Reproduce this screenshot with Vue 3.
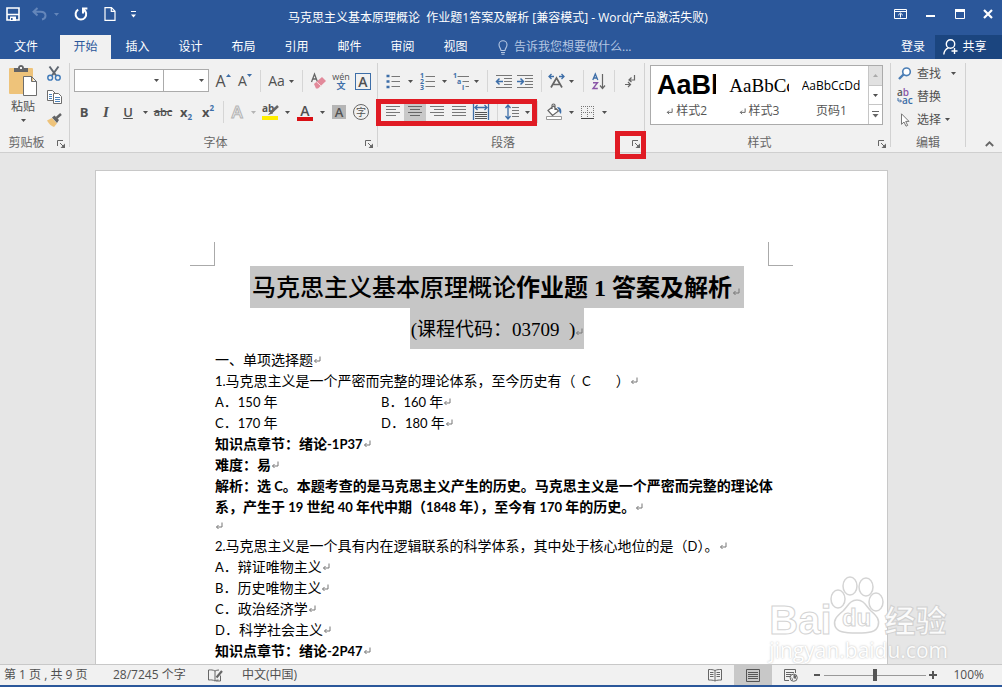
<script setup>
import { ref } from 'vue'

const tabs = ['文件', '开始', '插入', '设计', '布局', '引用', '邮件', '审阅', '视图']
const active = ref('开始')
const zoom = ref(50)

const styleItems = [
  { name: '样式2', linked: true, look: 'heading' },
  { name: '样式3', linked: true, look: 'serif' },
  { name: '页码1', linked: false, look: 'plain' },
]

const lines = [
  { cells: ['一、单项选择题'] },
  { cells: ['1.马克思主义是一个严密而完整的理论体系，至今历史有（  C        ）'] },
  { cells: ['A．150 年', 'B．160 年'] },
  { cells: ['C．170 年', 'D．180 年'] },
  { cells: ['知识点章节：绪论-1P37'], bold: true },
  { cells: ['难度：易'], bold: true },
  { cells: ['解析：选 C。本题考查的是马克思主义产生的历史。马克思主义是一个严密而完整的理论体'], bold: true, wrapped: true },
  { cells: ['系，产生于 19 世纪 40 年代中期（1848 年），至今有 170 年的历史。'], bold: true },
  { cells: [''], blank: true },
  { cells: ['2.马克思主义是一个具有内在逻辑联系的科学体系，其中处于核心地位的是（D）。'] },
  { cells: ['A．辩证唯物主义'] },
  { cells: ['B．历史唯物主义'] },
  { cells: ['C．政治经济学'] },
  { cells: ['D．科学社会主义'] },
  { cells: ['知识点章节：绪论-2P47'], bold: true },
]

// Latin runs use their own face and size beside the Chinese text.
const runs = (text) =>
  text.split(/([A-Za-z0-9.\-]+)/).filter(Boolean).map((t) => ({ t, latin: /^[A-Za-z0-9.\-]/.test(t) }))
</script>

<template>
  <div class="app">
    <svg class="defs" aria-hidden="true">
      <symbol id="caret" viewBox="0 0 5 3"><path d="M0 0h5L2.5 3z" fill="currentColor" /></symbol>
      <symbol id="ret" viewBox="0 0 8 8"><path d="M7 0.5v4.5H1.5M3.5 3L1.5 5l2 2" fill="none" stroke="currentColor" /></symbol>
      <symbol id="launch" viewBox="0 0 8 8">
        <path d="M0.5 6V0.5H6M3 3l3.5 3.5" fill="none" stroke="currentColor" /><path d="M8 3.5V8H3.5z" fill="currentColor" />
      </symbol>
    </svg>

    <header class="top">
      <div class="titlebar">
        <div class="quick">
          <button class="w26" aria-label="保存">
            <svg width="14" height="14" viewBox="0 0 14 14"><path d="M1 1h12v12H1zM1 7.5h12" fill="none" stroke="#fff" stroke-width="1.6" /><path d="M4 9.5h6V14H4z" fill="#fff" /><path d="M5 11h1.6v2H5z" fill="#2b579a" /></svg>
          </button>
          <button class="w26 dim" aria-label="撤消">
            <svg width="15" height="14" viewBox="0 0 15 14"><path d="M5.5 1L1.5 4.7l4 3.8M2 4.7h6.5c3 0 5 1.4 5 4 0 2-1.4 3.3-3.5 3.8" fill="none" stroke="currentColor" stroke-width="2" /></svg>
          </button>
          <button class="w8 dim" aria-label="撤消选项"><svg width="5" height="3"><use href="#caret" /></svg></button>
          <button class="w42" aria-label="重复">
            <svg width="14" height="14" viewBox="0 0 14 14"><path d="M4.2 2.6A5.3 5.3 0 1 0 9.6 2.6M9 6.4V1.6H13.4" fill="none" stroke="#fff" stroke-width="2" /></svg>
          </button>
          <button class="w16" aria-label="新建">
            <svg width="12" height="14" viewBox="0 0 12 14"><path d="M1 0.7h6.5L11 4.2v9.1H1zM7.3 0.7v3.7H11" fill="none" stroke="#fff" stroke-width="1.2" /></svg>
          </button>
          <button class="w30" aria-label="自定义">
            <svg width="5" height="7" viewBox="0 0 5 7"><path d="M0 0.5h5" stroke="#fff" /><path d="M0 3.5h5L2.5 6.5z" fill="#fff" /></svg>
          </button>
        </div>
        <h1>马克思主义基本原理概论&nbsp; 作业题1答案及解析 [兼容模式] - Word(产品激活失败)</h1>
        <div class="window">
          <button class="w28" aria-label="功能区显示选项">
            <svg width="13" height="10" viewBox="0 0 13 10"><path d="M0.5 0.5h12v9H0.5zM0.5 2.5h12M6.5 8.5V4.5M4.2 6.2L6.5 4l2.3 2.2" fill="none" stroke="#fff" /></svg>
          </button>
          <button class="w32" aria-label="最小化"><svg width="9" height="9"><path d="M0 6h9" stroke="#fff" stroke-width="2" /></svg></button>
          <button class="w28" aria-label="最大化"><svg width="10" height="10"><path d="M0.5 0.5h9v9H0.5z" fill="none" stroke="#fff" /><path d="M0 1.5h10" stroke="#fff" stroke-width="3" /></svg></button>
          <button class="w28" aria-label="关闭"><svg width="10" height="10"><path d="M1 1l8 8M9 1L1 9" stroke="#fff" stroke-width="2.2" /></svg></button>
        </div>
      </div>
      <nav class="tabs">
        <button v-for="t in tabs" :key="t" class="tab" :class="{ file: t === '文件', on: t === active }" @click="active = t">{{ t }}</button>
        <button class="tell">
          <svg width="10" height="15" viewBox="0 0 10 15"><path d="M3 10.5C3 8.5 1 7.6 1 4.8a4 4 0 0 1 8 0C9 7.6 7 8.5 7 10.5zM3 12.5h4M3.5 14.3h3" fill="none" stroke="currentColor" stroke-width="1.1" /></svg>
          <span>告诉我您想要做什么...</span>
        </button>
        <button class="login">登录</button>
        <button class="share">
          <svg width="15" height="16" viewBox="0 0 15 16"><circle cx="7.5" cy="5" r="4.2" fill="none" stroke="#fff" stroke-width="1.4" /><path d="M0.8 15.5c.3-3.500 2-5.600 4.700-6.600M8.500 12h6M11.500 9v6" fill="none" stroke="#fff" stroke-width="1.4" /></svg>
          共享
        </button>
      </nav>
    </header>

    <section class="ribbon">
      <div class="group clip">
        <div class="body split">
          <button class="paste">
            <svg width="28" height="31" viewBox="0 0 28 31"><rect y="3" width="24" height="26" rx="1" fill="#eec37a" /><path d="M5 3h4c0-4 6-4 6 0h4v4H5z" fill="#636466" /><rect x="11" y="2" width="2" height="2" fill="#f1f1f1" /><path d="M14.500 11.500h8l5 5v14h-13zM22.500 11.500v5h5" fill="#fff" stroke="#6d6d6d" /></svg>
            <span>粘贴</span>
            <svg width="5" height="3"><use href="#caret" /></svg>
          </button>
          <div class="stack">
            <button aria-label="剪切">
              <svg width="14" height="15" viewBox="0 0 14 15"><path d="M2.500 0.500l6.500 9M11.500 0.500L5 9.500" stroke="#5e6670" stroke-width="2" /><circle cx="3.200" cy="11.700" r="2.400" fill="none" stroke="#3d78b8" stroke-width="1.400" /><circle cx="10.800" cy="11.700" r="2.400" fill="none" stroke="#3d78b8" stroke-width="1.400" /></svg>
            </button>
            <button aria-label="复制">
              <svg width="15" height="14" viewBox="0 0 15 14"><path d="M0.500 0.500h5l2.500 2.500v7.500H0.500z" fill="#fff" stroke="#6d6d6d" /><path d="M2 4.500h3M2 6.500h3M2 8.500h3" stroke="#4a83bd" /><path d="M6.500 3.500h5l3 3v7h-8z" fill="#fff" stroke="#6d6d6d" /><path d="M8 7.500h5M8 9.500h5M8 11.500h5" stroke="#4a83bd" /></svg>
            </button>
            <button aria-label="格式刷">
              <svg width="15" height="14" viewBox="0 0 15 14"><path d="M0 7.500L5 5l5 5.500L7 14C4 13 2 11 0 7.500z" fill="#eec37a" /><path d="M5 4.500l2.500-2 4.500 4.500-2 3z" fill="#636466" /><path d="M9.500 5L14 1" stroke="#636466" stroke-width="2.500" /></svg>
            </button>
          </div>
        </div>
        <div class="caption"><span>剪贴板</span><button aria-label="剪贴板选项"><svg width="8" height="8"><use href="#launch" /></svg></button></div>
      </div>

      <div class="group font">
        <div class="body">
          <div class="row">
            <label class="combo wide"><select aria-label="字体名称"><option></option></select><svg width="5" height="3"><use href="#caret" /></svg></label>
            <label class="combo narrow"><select aria-label="字号"><option></option></select><svg width="5" height="3"><use href="#caret" /></svg></label>
            <button class="w22 big" aria-label="增大字号">A<svg class="mark" width="5" height="3" viewBox="0 0 5 3"><path d="M0 3h5L2.500 0z" fill="#3d6ea8" /></svg></button>
            <button class="w22 small" aria-label="减小字号">A<svg class="mark" width="5" height="3" viewBox="0 0 5 3"><path d="M0 0h5L2.500 3z" fill="#3d6ea8" /></svg></button>
            <i class="sep w8"></i>
            <button class="w34 case" aria-label="更改大小写">Aa <svg width="5" height="3"><use href="#caret" /></svg></button>
            <i class="sep w8"></i>
            <button class="w24" aria-label="清除格式">
              <svg width="15" height="16" viewBox="0 0 15 16"><path d="M0.500 9L3.500 1l3 8M2 6h3.500" fill="none" stroke="#666" stroke-width="1.300" /><path d="M3 11L11 4l4 4-8 7.500H5z" fill="#e2899a" /><path d="M5.500 8.800l5 4.500" stroke="#f8dfe3" /></svg>
            </button>
            <button class="w22 wen" aria-label="拼音指南"><span>wén</span><b>文</b></button>
            <button class="w22" aria-label="字符边框"><span class="boxed">A</span></button>
          </div>
          <div class="row">
            <button class="w22"><b>B</b></button>
            <button class="w22"><em>I</em></button>
            <button class="w22"><u>U</u></button>
            <button class="w12" aria-label="下划线选项"><svg width="5" height="3"><use href="#caret" /></svg></button>
            <button class="w24 strike"><s>abc</s></button>
            <button class="w22 idx"><b>x</b><sub>2</sub></button>
            <button class="w22 idx"><b>x</b><sup>2</sup></button>
            <i class="sep w8"></i>
            <button class="w20 outline">A</button>
            <button class="w12 pale" aria-label="文本效果选项"><svg width="5" height="3"><use href="#caret" /></svg></button>
            <button class="w22" aria-label="突出显示">
              <svg width="17" height="17" viewBox="0 0 17 17"><text x="0" y="8" font-size="10" font-weight="700" fill="#555" font-family="Open Sans, sans-serif">ab</text><path d="M16 2L9 8.500" stroke="#666" stroke-width="2.600" /><path d="M9.500 6.500L6 11l5-1.500z" fill="#666" /><rect y="12" width="16" height="4" fill="#ffee00" /></svg>
            </button>
            <button class="w12" aria-label="突出显示选项"><svg width="5" height="3"><use href="#caret" /></svg></button>
            <button class="w24 color"><span>A</span></button>
            <button class="w10" aria-label="颜色选项"><svg width="5" height="3"><use href="#caret" /></svg></button>
            <button class="w24"><span class="shade">A</span></button>
            <button class="w20"><span class="ring">字</span></button>
          </div>
        </div>
        <div class="caption"><span>字体</span><button aria-label="字体选项"><svg width="8" height="8"><use href="#launch" /></svg></button></div>
      </div>

      <div class="group para">
        <div class="body">
          <div class="row">
            <button class="w22" aria-label="项目符号">
              <svg width="14" height="15" viewBox="0 0 14 15"><path d="M0.500 2h3M0.500 7.500h3M0.500 13h3" stroke="#3d6ea8" stroke-width="2.400" /><path d="M5.500 2.500H14M5.500 7.500H14M5.500 12.500H14" stroke="#777" /></svg>
            </button>
            <button class="w12" aria-label="项目符号选项"><svg width="5" height="3"><use href="#caret" /></svg></button>
            <button class="w22" aria-label="编号">
              <svg width="15" height="17" viewBox="0 0 15 17"><g font-size="7" font-weight="700" fill="#3d6ea8" font-family="Open Sans, sans-serif"><text y="5">1</text><text y="11">2</text><text y="17">3</text></g><path d="M5.500 3.500H15M5.500 8.500H15M5.500 13.500H15" stroke="#777" /></svg>
            </button>
            <button class="w12" aria-label="编号选项"><svg width="5" height="3"><use href="#caret" /></svg></button>
            <button class="w22" aria-label="多级列表">
              <svg width="17" height="17" viewBox="0 0 17 17"><g font-size="7" font-weight="700" fill="#3d6ea8" font-family="Open Sans, sans-serif"><text y="5">1</text><text x="4" y="11">a</text><text x="9" y="17">i</text></g><path d="M4.500 3.500H16M9.500 8.500H16M12.500 13.500H16" stroke="#777" /></svg>
            </button>
            <button class="w8" aria-label="多级列表选项"><svg width="5" height="3"><use href="#caret" /></svg></button>
            <i class="sep w14"></i>
            <button class="w20" aria-label="减少缩进">
              <svg width="16" height="13" viewBox="0 0 16 13"><path d="M0 0.500h16M8 3.500h8M8 6.500h8M8 9.500h8M0 12.500h16" stroke="#777" /><path d="M7 6.500H1M3.500 3.500l-3 3 3 3" fill="none" stroke="#3d6ea8" stroke-width="1.500" /></svg>
            </button>
            <button class="w22" aria-label="增加缩进">
              <svg width="16" height="13" viewBox="0 0 16 13"><path d="M0 0.500h16M8 3.500h8M8 6.500h8M8 9.500h8M0 12.500h16" stroke="#777" /><path d="M0 6.500h6M3.500 3.500l3 3-3 3" fill="none" stroke="#3d6ea8" stroke-width="1.500" /></svg>
            </button>
            <i class="sep w10"></i>
            <button class="w20" aria-label="中文版式">
              <svg width="17" height="14" viewBox="0 0 17 14"><path d="M3 13.500L8.500 4l5.500 9.500M5.500 10.500h6" fill="none" stroke="#666" stroke-width="1.700" /><path d="M6 2.500H1M3.500 0L1 2.500 3.500 5M11 2.500h5M13.500 0L16 2.500 13.500 5" fill="none" stroke="#3d6ea8" stroke-width="1.300" /></svg>
            </button>
            <button class="w10" aria-label="中文版式选项"><svg width="5" height="3"><use href="#caret" /></svg></button>
            <i class="sep w14"></i>
            <button class="w18" aria-label="排序">
              <svg width="14" height="17" viewBox="0 0 14 17"><path d="M0.800 7L3.300 1l2.500 6M1.700 5h3.200" fill="none" stroke="#3d6ea8" stroke-width="1.300" /><path d="M1 9.700h4.500L1 15.500h4.800" fill="none" stroke="#8a56a8" stroke-width="1.400" /><path d="M10.500 1v14M8 12.500l2.500 3 2.500-3" fill="none" stroke="#666" stroke-width="1.200" /></svg>
            </button>
            <i class="sep w12"></i>
            <button class="w20" aria-label="显示编辑标记">
              <svg width="11" height="14" viewBox="0 0 11 14"><path d="M9.500 1v5H4M6.500 3.500L4 6l2.500 2M0 10.500h5M3 8l2.500 2.500L3 13" fill="none" stroke="#666" stroke-width="1.200" /></svg>
            </button>
          </div>
          <div class="row">
            <button class="w22" aria-label="左对齐"><svg width="14" height="12"><path d="M0 .5h14M0 3.500h10M0 6.500h14M0 9.500h10" stroke="#777" /></svg></button>
            <button class="w22 pressed" aria-label="居中"><svg width="14" height="12"><path d="M0 .5h14M2 3.500h10M0 6.500h14M2 9.500h10" stroke="#666" /></svg></button>
            <button class="w22" aria-label="右对齐"><svg width="14" height="12"><path d="M0 .5h14M4 3.500h10M0 6.500h14M4 9.500h10" stroke="#777" /></svg></button>
            <button class="w22" aria-label="两端对齐"><svg width="14" height="12"><path d="M0 .5h14M0 3.500h14M0 6.500h14M0 9.500h14" stroke="#777" /></svg></button>
            <button class="w22" aria-label="分散对齐"><svg width="16" height="16" viewBox="0 0 16 16"><path d="M0.500 0v16M15.500 0v16M2 3.500h12M4.500 1L2 3.500 4.500 6M11.500 1L14 3.500 11.500 6" fill="none" stroke="#3d6ea8" stroke-width="1.300" /><path d="M2 8.500h12M2 10.500h12M2 12.500h12M2 14.500h12" stroke="#555" /></svg></button>
            <i class="sep w10"></i>
            <button class="w20" aria-label="行距"><svg width="14" height="16" viewBox="0 0 14 16"><path d="M3 1v14M0.500 4L3 1l2.500 3M0.500 12L3 15l2.500-3" fill="none" stroke="#3d6ea8" stroke-width="1.300" /><path d="M7 3.500h7M7 6.500h7M7 9.500h7M7 12.500h7" stroke="#777" /></svg></button>
            <button class="w10" aria-label="行距选项"><svg width="5" height="3"><use href="#caret" /></svg></button>
            <i class="sep w10"></i>
            <button class="w24" aria-label="底纹"><svg width="17" height="16" viewBox="0 0 17 16"><path d="M2 6.500L7.500 2l5 5-6 4.500zM6 5V1.500c0-2 3-2 3 0V6" fill="#fff" stroke="#666" stroke-width="1.200" /><path d="M11 3c4 0 5 3 4 7-1-1-2-2-2-4z" fill="#3d6ea8" /><path d="M0.500 12.500h15v3h-15z" fill="#fff" stroke="#999" /></svg></button>
            <button class="w10" aria-label="底纹选项"><svg width="5" height="3"><use href="#caret" /></svg></button>
            <button class="w22" aria-label="边框"><svg width="13" height="13" viewBox="0 0 13 13"><path d="M0.500 0v12M6.500 0v12M12.500 0v12M0 0.500h13M0 6.500h13" stroke="#777" stroke-dasharray="1 1" /><path d="M0 12.500h13" stroke="#444" /></svg></button>
            <button class="w12" aria-label="边框选项"><svg width="5" height="3"><use href="#caret" /></svg></button>
            <span class="redbox align"></span>
          </div>
        </div>
        <div class="caption"><span>段落</span><button aria-label="段落选项"><svg width="8" height="8"><use href="#launch" /></svg></button><span class="redbox corner"></span></div>
      </div>

      <div class="group styles">
        <div class="body">
          <div class="gallery">
            <button v-for="s in styleItems" :key="s.name" class="item">
              <span class="preview" :class="s.look">AaBbCcDd</span>
              <span class="name"><svg v-if="s.linked" width="7" height="7"><use href="#ret" /></svg>{{ s.name }}</span>
            </button>
            <div class="scroller">
              <button class="off" aria-label="上一行"><svg width="5" height="3" viewBox="0 0 5 3"><path d="M0 3h5L2.500 0z" fill="#aaa" /></svg></button>
              <button aria-label="下一行"><svg width="5" height="3"><use href="#caret" /></svg></button>
              <button aria-label="更多样式"><svg width="7" height="7" viewBox="0 0 7 7"><path d="M0 0.500h7" stroke="#666" /><path d="M0.500 3h6L3.500 6.500z" fill="#666" /></svg></button>
            </div>
          </div>
        </div>
        <div class="caption"><span>样式</span><button aria-label="样式选项"><svg width="8" height="8"><use href="#launch" /></svg></button></div>
      </div>

      <div class="group edit">
        <div class="body stack">
          <button><svg width="16" height="14" viewBox="0 0 16 14"><circle cx="9.500" cy="4.800" r="3.800" fill="#fff" stroke="#4a7db5" stroke-width="1.600" /><path d="M6.500 7.500L2 12" stroke="#4a7db5" stroke-width="2.400" /></svg>查找<svg class="far" width="5" height="3"><use href="#caret" /></svg></button>
          <button><svg width="16" height="16" viewBox="0 0 16 16"><g font-size="10" font-weight="600" font-family="Open Sans, sans-serif"><text y="7" fill="#555">a<tspan fill="#8a56a8">b</tspan></text><text x="5" y="15" fill="#3d6ea8">ac</text></g><path d="M1 9v3h3M3 10.500L4.500 12 3 13.500" fill="none" stroke="#3d6ea8" /></svg>替换</button>
          <button><svg width="16" height="14" viewBox="0 0 16 14"><path d="M4.500 0.800v10.500l2.500-2.300 2 4.200 1.700-.8-2-4h3.300z" fill="#fff" stroke="#777" /></svg>选择<svg width="5" height="3"><use href="#caret" /></svg></button>
        </div>
        <div class="caption"><span>编辑</span></div>
      </div>
      <button class="collapse" aria-label="折叠功能区"><svg width="9" height="6" viewBox="0 0 9 6"><path d="M0.800 5l3.700-3.700L8.200 5" fill="none" stroke="#666" stroke-width="1.800" /></svg></button>
    </section>

    <main class="work">
      <article class="page">
        <div class="corners"><i class="left"></i><i class="right"></i></div>
        <div class="doc">
          <h2><span class="sel"><span class="light">马克思主义基本原理概论</span>作业题 1 答案及解析<svg class="ret" width="8" height="8"><use href="#ret" /></svg></span></h2>
          <p class="sub"><span class="sel">(课程代码：03709&nbsp; )<svg class="ret" width="8" height="8"><use href="#ret" /></svg></span></p>
          <p v-for="(l, i) in lines" :key="i" class="line" :class="{ bold: l.bold, blank: l.blank }">
            <span v-for="(c, j) in l.cells" :key="j" :class="{ half: l.cells.length > 1 && j === 0 }"><span v-for="(r, k) in runs(c)" :key="k" :class="{ latin: r.latin }">{{ r.t }}</span></span><svg v-if="!l.wrapped" class="ret" width="8" height="8"><use href="#ret" /></svg>
          </p>
        </div>
      </article>
      <div class="watermark">
        <div class="brand">
          <span class="bai">Bai</span>
          <span class="paw">
            <svg width="54" height="58" viewBox="0 0 54 58"><g fill="#fff" stroke="#cdcdcd" stroke-width="1.500"><ellipse cx="8" cy="23" rx="7" ry="9" /><ellipse cx="20" cy="10" rx="7" ry="9" /><ellipse cx="36" cy="11" rx="7" ry="9" /><ellipse cx="46" cy="26" rx="7" ry="9" /><path d="M27 24c7 0 9 6 14 11 6 5 9 9 7 15-2 6-8 7-21 7s-20-1-22-7c-2-6 2-10 8-15 5-5 7-11 14-11z" /></g></svg>
            <b>du</b>
          </span>
          <span class="jy">经验</span>
        </div>
        <div class="url">jingyan.baidu.com</div>
      </div>
    </main>

    <footer class="status">
      <span class="w90">第 1 页 , 共 9 页</span>
      <span class="w76">28/7245 个字</span>
      <button class="proof" aria-label="校对"><svg width="15" height="13" viewBox="0 0 15 13"><path d="M7 12V2C5 .8 3 .8 .5 1v10c2.500-.2 4.500-.2 6.500 1 1-.6 2-1 3.500-1M7 2c1-.7 2.500-1 4-1" fill="none" stroke="#666" /><path d="M14 2L8.500 8.500" stroke="#666" stroke-width="2.200" /><path d="M12.500 6.500V12H8" fill="none" stroke="#666" /></svg></button>
      <span>中文(中国)</span>
      <div class="views">
        <button aria-label="阅读视图"><svg width="14" height="13" viewBox="0 0 14 13"><path d="M7 12V1.500C5 .5 3 .5 .5 .5v10.500C3 11 5 11 7 12c2-1 4-1 6.500-1V.5C11 .5 9 .5 7 1.500M2 3.500h3.500M2 5.500h3.500M2 7.500h3.500M8.500 3.500H12M8.500 5.500H12M8.500 7.500H12" fill="none" stroke="#666" /></svg></button>
        <button class="on" aria-label="页面视图"><svg width="14" height="13" viewBox="0 0 14 13"><path d="M.5 .5h13v12H.5zM2 3.500h10M2 5.500h10M2 7.500h10M2 9.500h10" fill="none" stroke="#555" /></svg></button>
        <button aria-label="Web 版式视图"><svg width="14" height="13" viewBox="0 0 14 13"><path d="M5 11.500H.5V.5h11V4M2 3.500h8M2 5.500h5M2 7.500h4" fill="none" stroke="#666" /><circle cx="9.700" cy="8.700" r="3.600" fill="#f1f1f1" stroke="#666" /><path d="M9.500 5.500l3 1.500-1 3-2-1zM7 8l2 2v2z" fill="#666" /></svg></button>
        <button class="step" aria-label="缩小"><svg width="6" height="8"><path d="M0 4h6" stroke="#555" stroke-width="2" /></svg></button>
        <input v-model="zoom" type="range" min="0" max="100" aria-label="缩放" />
        <button class="step" aria-label="放大"><svg width="8" height="8"><path d="M0 4h8M4 0v8" stroke="#555" stroke-width="2" /></svg></button>
        <span class="pct">100%</span>
      </div>
    </footer>
  </div>
</template>

<style>
body { margin: 0; }
</style>

<style scoped>
* { box-sizing: border-box; }
.app {
  height: 100vh; display: flex; flex-direction: column; overflow: hidden;
  font: 12px/18px "Open Sans", "Noto Sans CJK SC", sans-serif; color: #505050; white-space: nowrap;
}
.defs { position: absolute; width: 0; height: 0; }
button {
  padding: 0; border: 0; background: none; font: inherit; color: inherit; white-space: nowrap;
  display: flex; align-items: center; justify-content: center; flex: none;
}
svg { flex: none; overflow: visible; }
p, h1, h2 { margin: 0; font-weight: 400; font-size: inherit; }

.w8 { width: 8px; } .w10 { width: 10px; } .w12 { width: 12px; } .w14 { width: 14px; } .w16 { width: 16px; }
.w18 { width: 18px; } .w20 { width: 20px; } .w22 { width: 22px; } .w24 { width: 24px; } .w26 { width: 26px; }
.w28 { width: 28px; } .w30 { width: 30px; } .w32 { width: 32px; } .w34 { width: 34px; } .w42 { width: 42px; }
.w76 { width: 76px; } .w90 { width: 90px; }

.top { background: #2b579a; color: #fff; }
.titlebar { height: 35px; display: grid; grid-template-columns: 1fr auto 1fr; align-items: center; }
.titlebar h1 { padding-right: 6px; }
.quick { display: flex; height: 28px; margin-bottom: 7px; align-self: end; }
.dim { color: #7d9ac8; opacity: 0.7; }
.window { display: flex; justify-content: flex-end; height: 28px; margin-bottom: 7px; align-self: end; }
.tabs { display: flex; height: 24px; }
.tab { width: 53px; padding-bottom: 1px; }
.tab.file { width: 52px; margin-right: 8px; }
.tab.on { width: 51px; background: #f1f1f1; color: #2b579a; }
.tell { margin-left: 16px; gap: 6px; color: #b4c6e2; }
.login { margin-left: auto; width: 44px; padding-bottom: 1px; }
.share { width: 67px; gap: 4px; padding: 0 7px 1px 0; background: #1b457f; }

.ribbon { display: flex; height: 94px; flex: none; background: #f1f1f1; border-bottom: 1px solid #cfcfcf; }
.group { display: flex; flex-direction: column; position: relative; flex: none; }
.group::after { content: ""; position: absolute; right: 0; top: 4px; bottom: 5px; border-right: 1px solid #d2d2d2; }
.clip { width: 70px; }
.font { width: 308px; }
.para { width: 267px; }
.styles { flex: 0 1 246px; min-width: 0; }
.edit { width: 75px; }
.body { height: 74px; padding: 10px 4px 0; }
.caption { display: flex; height: 19px; color: #666; position: relative; line-height: 20px; padding-right: 1px; }
.caption span:first-child { flex: 1; text-align: center; }
.caption button { width: 16px; padding-top: 3px; }
.row { display: flex; height: 24px; margin-bottom: 7px; position: relative; }
.font .row:last-child { margin-left: -1px; }
.sep { position: relative; flex: none; }
.sep::after { content: ""; position: absolute; left: 50%; top: 1px; bottom: 1px; border-left: 1px solid #d6d6d6; }

.body.split { display: flex; padding: 3px 0 0; }
.paste { width: 46px; flex-direction: column; justify-content: flex-start; padding-top: 3px; line-height: 22px; }
.paste svg:last-child { margin-top: 1px; }
.stack { display: flex; flex-direction: column; }
.stack button { height: 23px; }
.split .stack { width: 16px; }
.body.stack { padding: 3px 0 0 6px; }
.edit .stack button { justify-content: flex-start; gap: 4px; }
.edit .far { margin-left: 6px; }

.combo { position: relative; display: flex; align-items: center; height: 23px; }
.combo select { appearance: none; width: 100%; height: 100%; border: 1px solid #ababab; border-radius: 0; background: #fff; margin: 0; }
.combo svg { position: absolute; right: 5px; }
.wide { width: 92px; margin-right: -1px; }
.narrow { width: 47px; margin-right: 3px; }
.big, .small { font-size: 16px; position: relative; }
.small { font-size: 14px; }
.big .mark, .small .mark { align-self: flex-start; margin-top: 5px; }
.case { font-size: 14px; gap: 4px; }
.wen { flex-direction: column; font-size: 9px; line-height: 9px; }
.wen b { color: #3d6ea8; line-height: 10px; }
.boxed { width: 16px; border: 1px solid #3d6ea8; font-size: 14px; font-weight: 600; line-height: 15px; }
.row b, .row em, .row u { font-size: 13px; }
.row .wen b { font-size: 9px; }
.row u, .row em { font-weight: 600; }
.row em { font-family: "Liberation Serif", serif; font-size: 15px; }
.strike { font-size: 11px; font-weight: 600; }
.idx sub, .idx sup { font-size: 8px; line-height: 8px; color: #3d6ea8; font-weight: 700; }
.idx sub { margin-top: 9px; }
.idx sup { margin-top: -9px; }
.outline { font-size: 17px; font-weight: 600; color: #f1f1f1; -webkit-text-stroke: 1px #b4b4b4; }
.pale { color: #b4b4b4; }
.color span { width: 16px; border-bottom: 4px solid #d90f14; font-size: 14px; font-weight: 600; line-height: 13px; }
.shade { width: 14px; background: #b5b5b5; font-size: 13px; font-weight: 600; line-height: 14px; }
.ring { width: 16px; height: 16px; border: 1px solid #666; border-radius: 50%; font-size: 10px; line-height: 14px; }
.pressed { background: #c8c8c8; height: 20px; align-self: center; }
.redbox { position: absolute; border: 5px solid #e01b24; pointer-events: none; }
.align { left: -6px; top: -1px; width: 161px; height: 27px; }
.corner { right: -1px; top: -2px; width: 31px; height: 28px; z-index: 2; }

.styles .body { padding: 6px 8px 0 5px; }
.gallery { display: flex; height: 60px; background: #fff; border: 1px solid #ababab; overflow: hidden; }
.item { flex: 1 1 72px; min-width: 0; flex-direction: column; align-items: stretch; justify-content: flex-start; padding: 2px 7px 0 6px; }
.preview { height: 34px; line-height: 36px; overflow: hidden; text-align: left; color: #000; }
.heading { font: 700 27px/34px "Liberation Sans", sans-serif; }
.serif { font: 19px/36px "Liberation Serif", serif; }
.name { display: flex; gap: 3px; align-items: center; justify-content: center; color: #555; }
.scroller { width: 14px; display: flex; flex-direction: column; border-left: 1px solid #c6c6c6; }
.scroller button { flex: 1; border-bottom: 1px solid #c6c6c6; }
.scroller .off { background: #e1e1e1; }
.scroller button:last-child { border: 0; }
.collapse { margin-left: auto; width: 26px; align-self: flex-end; height: 16px; }

.work { flex: 1; min-height: 0; position: relative; overflow: hidden; background: #e6e6e6; padding: 17px 19px 0 0; }
.page { max-width: 793px; height: 1120px; margin: 0 auto; background: #fff; border: 1px solid #c8c8c8; padding-top: 71px; color: #000; }
.corners { display: flex; justify-content: space-between; padding: 0 94px; height: 24px; }
.corners i { width: 25px; border-bottom: 1px solid #aaa; }
.corners .left { border-right: 1px solid #aaa; }
.corners .right { border-left: 1px solid #aaa; }
.doc { padding: 0 118px 0 119px; font: 14px/21px "Noto Sans CJK SC", sans-serif; }
.ret { color: #777; }
h2, .sub { display: flex; justify-content: center; padding-left: 10px; margin: 0 -20px; }
.sel { background: #c6c6c6; padding: 2px 1px 0; }
h2 { font: 700 24px/40px "Liberation Serif", "Noto Sans CJK SC", serif; }
h2 .sel { padding: 2px 4px 0 2px; }
.light { font-weight: 500; }
.sub { font: 19px/39px "Liberation Serif", "Noto Sans CJK SC", serif; }
.line { height: 21px; white-space: pre; display: flex; align-items: center; }
.bold { font-weight: 700; }
.blank { height: 18px; }
.latin { font-family: Lato, "Noto Sans CJK SC", sans-serif; font-size: 13px; }
.half { width: 166px; }

.watermark { position: absolute; right: 54px; bottom: 0; opacity: 0.85; color: #fff; }
.brand { display: flex; align-items: flex-end; height: 60px; margin-right: -1px; }
.bai { font: 700 40px/40px "Liberation Sans", sans-serif; margin-bottom: -4px; }
.bai, .jy { -webkit-text-stroke: 1px #cdcdcd; }
.paw { position: relative; height: 58px; margin-bottom: 2px; margin-left: -2px; }
.paw b { position: absolute; left: 0; right: 0; bottom: 2px; text-align: center; font: 700 24px/28px "Liberation Sans", sans-serif; -webkit-text-stroke: 1px #cdcdcd; }
.jy { font: 700 31px/34px "Noto Sans CJK SC", sans-serif; margin-left: 1px; }
.url { font: 21px/28px "Open Sans", sans-serif; text-shadow: 0 0 2px #aaa; }

.status { display: flex; align-items: center; gap: 19px; height: 23px; flex: none; padding: 0 18px 0 4px; background: #f1f1f1; border-top: 1px solid #c8c8c8; border-bottom: 2px solid #2b579a; }
.views { margin-left: auto; display: flex; align-items: center; align-self: stretch; }
.views button { width: 38px; align-self: stretch; }
.views .on { background: #c8c8c8; }
.views .step { width: 14px; }
.views input { appearance: none; width: 102px; height: 12px; margin: 0; background: linear-gradient(#999, #999) center / 100% 1px no-repeat; }
.views input::-webkit-slider-thumb { appearance: none; width: 4px; height: 12px; background: #555; }
.pct { margin-left: 13px; }
</style>
